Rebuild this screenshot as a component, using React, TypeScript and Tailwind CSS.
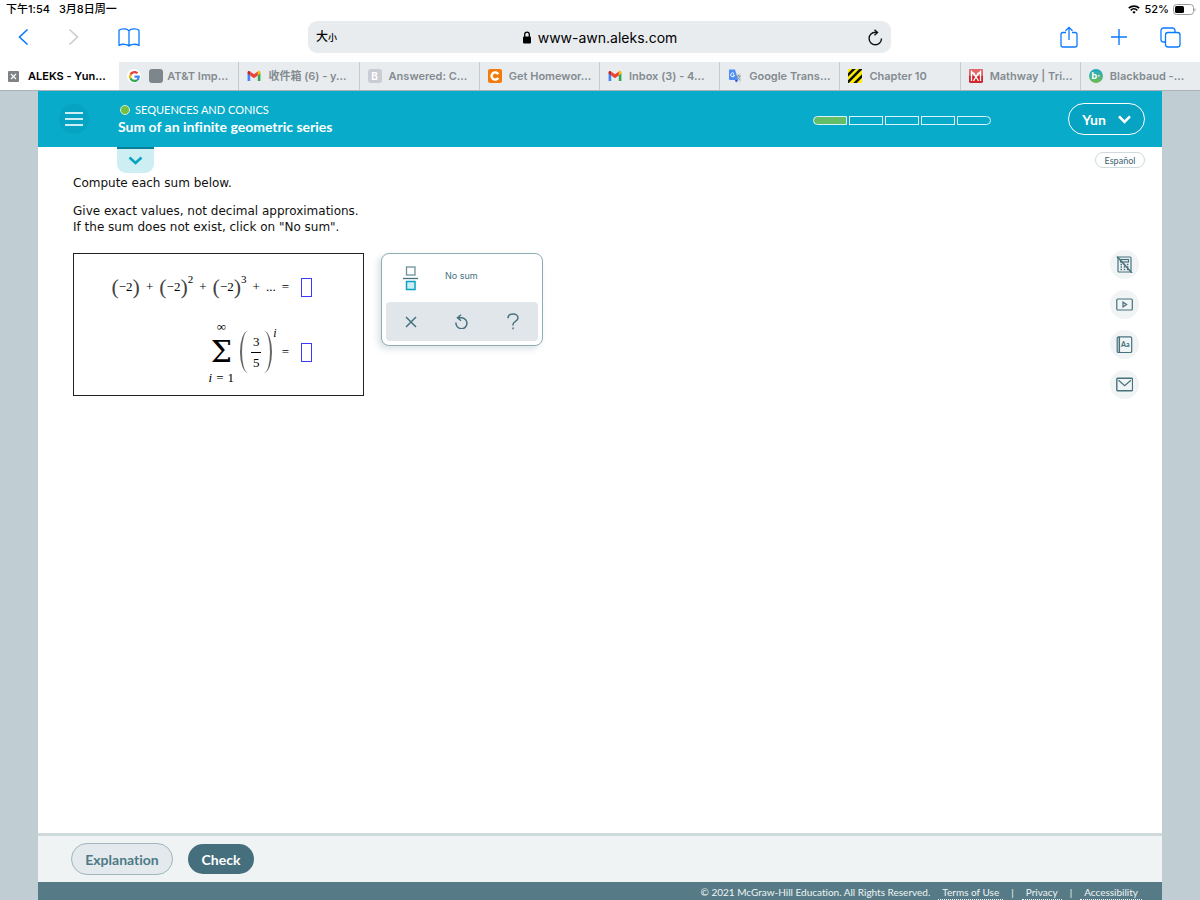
import type { ReactNode } from "react";
import clsx from "clsx";

const GmailIcon = () => (
  <svg width="14" height="14" viewBox="0 0 24 24">
    <path d="M1 20V6.500L5.500 10v10.500H2A1 1 0 0 1 1 20z" fill="#4285f4"/>
    <path d="M23 20V6.500L18.500 10v10.500H22a1 1 0 0 0 1-.5z" fill="#34a853"/>
    <path d="M18.500 5v6L23 7.500V6c0-2.400-2.600-3.600-4.500-2.200z" fill="#fbbc04"/>
    <path d="M1 6v1.500L5.500 11V4.500l-.5-.4C3.200 2.800 1 3.800 1 6z" fill="#c5221f"/>
    <path d="M5.500 11V4.200L12 9.200l6.500-5V11L12 16z" fill="#ea4335"/>
  </svg>
);

const GoogleIcon = () => (
  <span className="flex size-[14px] items-center justify-center rounded-full bg-white">
    <svg width="11" height="11" viewBox="0 0 48 48">
      <path fill="#ea4335" d="M24 9.500c3.500 0 6.700 1.200 9.200 3.600l6.900-6.900C35.900 2.400 30.500 0 24 0 14.600 0 6.500 5.400 2.600 13.200l8 6.200C12.400 13.700 17.700 9.500 24 9.500z"/>
      <path fill="#4285f4" d="M47 24.600c0-1.600-.2-3.100-.4-4.600H24v9h12.900c-.6 3-2.300 5.500-4.800 7.200l7.700 6C44.400 38 47 31.800 47 24.600z"/>
      <path fill="#fbbc05" d="M10.500 28.600a14.500 14.500 0 0 1 0-9.200l-8-6.200a24 24 0 0 0 0 21.600z"/>
      <path fill="#34a853" d="M24 48c6.500 0 11.900-2.100 15.900-5.800l-7.700-6c-2.200 1.500-4.900 2.300-8.200 2.300-6.300 0-11.600-4.200-13.500-9.900l-8 6.200C6.500 42.600 14.600 48 24 48z"/>
    </svg>
  </span>
);

const TranslateIcon = () => (
  <svg width="14" height="14" viewBox="0 0 14 14">
    <path d="M5 4h8v9.500H8z" fill="#dcdfe2"/>
    <path d="M8.500 7h4M10.500 6v1M12 7c-.5 2-1.500 3-3 4M9.500 8c.5 1.500 1.500 2.500 3 3" stroke="#8b9499" fill="none"/>
    <path d="M1 .5h6L10 11H2a1 1 0 0 1-1-1z" fill="#4e8df5"/>
    <path d="M7 11h3L8 13.500z" fill="#2348c9"/>
    <path d="M6 4.500A1.900 1.900 0 1 0 6.500 6H4.800" stroke="#fff" fill="none"/>
  </svg>
);

const StripesIcon = () => (
  <svg width="14" height="14" viewBox="0 0 14 14">
    <rect width="14" height="14" fill="#ffee00"/>
    <path d="M-1 7 7-1M-1 14 14-1M6 15 15 6" stroke="#111" strokeWidth="2.600"/>
  </svg>
);

const MathwayIcon = () => (
  <svg width="14" height="14" viewBox="0 0 14 14">
    <rect width="14" height="14" rx="1.500" fill="#d0272a"/>
    <rect width="14" height="7" rx="1.500" fill="#e4676a"/>
    <path d="M2.500 12V2.500L7 8l4.500-5.500V12M4.500 12l5-8.500M9.500 12l-5-8.500" stroke="#fff" strokeWidth="1.300" fill="none"/>
  </svg>
);

const tabs: { title: string; icon: ReactNode }[] = [
  {
    title: "ALEKS - Yun...",
    icon: (
      <svg width="11" height="11" viewBox="0 0 11 11">
        <rect width="11" height="11" rx="1" fill="#7d8387"/>
        <path d="m3 3 5 5M8 3 3 8" stroke="#fff" strokeWidth="1.200"/>
      </svg>
    ),
  },
  {
    title: "AT&T Imp...",
    icon: (
      <>
        <GoogleIcon/>
        <span className="ml-1 size-[14px] rounded-[3px] bg-[#7d868b]"/>
      </>
    ),
  },
  { title: "收件箱 (6) - y...", icon: <GmailIcon/> },
  {
    title: "Answered: C...",
    icon: <span className="flex size-[14px] items-center justify-center rounded-[3px] bg-[#cbcbd3] text-[10px] font-bold text-white">B</span>,
  },
  {
    title: "Get Homewor...",
    icon: (
      <svg width="14" height="14" viewBox="0 0 14 14">
        <rect width="14" height="14" rx="2" fill="#f47b0b"/>
        <path d="M10.300 5.200a3.600 3.600 0 1 0 0 3.600" stroke="#fff" strokeWidth="2.400" fill="none"/>
      </svg>
    ),
  },
  { title: "Inbox (3) - 4...", icon: <GmailIcon/> },
  { title: "Google Trans...", icon: <TranslateIcon/> },
  { title: "Chapter 10", icon: <StripesIcon/> },
  { title: "Mathway | Tri...", icon: <MathwayIcon/> },
  {
    title: "Blackbaud -...",
    icon: <span className="flex size-[14px] items-center justify-center rounded-full bg-linear-to-b from-[#14a7c9] to-[#6dbb45] text-[9px] font-bold text-white">b·</span>,
  },
];

function StatusBar() {
  return (
    <div className="flex h-[18px] items-center justify-between pr-1 pl-[6px] text-[11px] leading-[18px] font-medium text-black">
      <div className="flex gap-[9px]">
        <span>下午1:54</span>
        <span>3月8日周一</span>
      </div>
      <div className="flex items-center gap-1">
        <svg width="12" height="9" viewBox="0 0 12 9" fill="none" stroke="#000" strokeWidth="1.700">
          <path d="M.8 3.200a7.500 7.500 0 0 1 10.400 0M2.700 5.300a4.700 4.700 0 0 1 6.600 0"/>
          <path d="M6 8.800 4.300 7a2.500 2.500 0 0 1 3.400 0z" fill="#000" stroke="none"/>
        </svg>
        <span>52%</span>
        <svg width="23" height="11" viewBox="0 0 23 11">
          <rect x=".5" y=".5" width="20" height="10" rx="3" fill="none" stroke="#9a9a9a"/>
          <rect x="2" y="2" width="9" height="7" rx="1.500" fill="#000"/>
          <path d="M21.500 4v3.500c1.400-.6 1.400-2.900 0-3.500z" fill="#9a9a9a"/>
        </svg>
      </div>
    </div>
  );
}

function Toolbar() {
  return (
    <div className="flex h-[44px] items-center pb-[6px] text-[#0a7aff]">
      <div className="flex w-[308px] items-center gap-[39px] pl-[18px]">
        <button aria-label="Back">
          <svg width="11" height="18" viewBox="0 0 11 18" fill="none" stroke="currentColor" strokeWidth="1.600"><path d="M9.500 1.500 1.500 9l8 7.500"/></svg>
        </button>
        <button aria-label="Forward" className="text-[#c9cccf]">
          <svg width="11" height="18" viewBox="0 0 11 18" fill="none" stroke="currentColor" strokeWidth="1.600"><path d="m1.500 1.500 8 7.500-8 7.500"/></svg>
        </button>
        <button aria-label="Bookmarks">
          <svg width="22" height="19" viewBox="0 0 22 19" fill="none" stroke="currentColor" strokeWidth="1.300" strokeLinejoin="round">
            <path d="M11 3C9.500.2 3 .2 1 2.200V17.500c2.500-1.800 8.500-1.600 10 .5V3zM11 3c1.500-2.800 8-2.800 10-.8V17.500c-2.500-1.800-8.500-1.600-10 .5"/>
          </svg>
        </button>
      </div>
      <div className="flex h-8 flex-1 items-center justify-between rounded-[9px] bg-[#e9ecef] px-2 text-black">
        <button className="w-6 text-left text-[12px] font-medium">大<span className="text-[9px]">小</span></button>
        <div className="flex items-center gap-[6px] text-[14px]">
          <svg width="10" height="13" viewBox="0 0 10 13">
            <rect x="1" y="5.500" width="8" height="7" rx="1" fill="#000"/>
            <path d="M2.700 6V3.500a2.300 2.300 0 0 1 4.600 0V6" stroke="#000" strokeWidth="1.300" fill="none"/>
          </svg>
          www-awn.aleks.com
        </div>
        <button aria-label="Reload" className="flex w-6 justify-end">
          <svg width="15" height="17" viewBox="0 0 15 17" fill="none" stroke="#111" strokeWidth="1.400">
            <path d="M13.500 9.500A6.200 6.200 0 1 1 7.300 3.300h2"/><path d="m6.500.8 3 2.600-3 2.800"/>
          </svg>
        </button>
      </div>
      <div className="flex w-[309px] items-center justify-end gap-[33px] pr-[19px]">
        <button aria-label="Share">
          <svg width="18" height="22" viewBox="0 0 18 22" fill="none" stroke="currentColor" strokeWidth="1.300">
            <path d="M6 6.500H3a2 2 0 0 0-2 2V19a2 2 0 0 0 2 2h12a2 2 0 0 0 2-2V8.500a2 2 0 0 0-2-2h-3M9 14V1.500M5.500 4.800 9 1.300l3.500 3.500"/>
          </svg>
        </button>
        <button aria-label="New tab">
          <svg width="16" height="16" viewBox="0 0 16 16" stroke="currentColor" strokeWidth="1.400"><path d="M8 0v16M0 8h16"/></svg>
        </button>
        <button aria-label="Show tabs">
          <svg width="21" height="21" viewBox="0 0 21 21" fill="none" stroke="currentColor" strokeWidth="1.300">
            <rect x="5.500" y="5.500" width="14.500" height="14.500" rx="2.500"/>
            <path d="M5.500 15H3.500A2.500 2.500 0 0 1 1 12.500v-9A2.500 2.500 0 0 1 3.500 1h9A2.500 2.500 0 0 1 15 3.500v2"/>
          </svg>
        </button>
      </div>
    </div>
  );
}

function TabStrip() {
  return (
    <div className="flex h-[29px] border-b border-[#a9b3b8]">
      {tabs.map((tab, i) => (
        <button
          key={tab.title}
          className={clsx(
            "flex min-w-0 flex-1 items-center pl-2 text-[11px] font-semibold whitespace-nowrap",
            i === 0 ? "gap-[9px] bg-white text-black" : "bg-[#e9ecef] text-[#838b90]",
            i === 1 && "gap-1",
            i > 1 && "gap-[7px] border-l border-[#c3cbcf]",
          )}
        >
          {tab.icon}
          {tab.title}
        </button>
      ))}
    </div>
  );
}

function Header() {
  return (
    <header className="flex h-14 items-center bg-[#08acca] pr-[17px] pl-[21px] font-['Lato',sans-serif] text-white">
      <button aria-label="Menu" className="flex size-[30px] flex-col items-center justify-center gap-1 rounded-full bg-[#06a3c2]">
        <span className="h-[2px] w-[18px] bg-white/80"/>
        <span className="h-[2px] w-[18px] bg-white/80"/>
        <span className="h-[2px] w-[18px] bg-white/80"/>
      </button>
      <div className="ml-[29px]">
        <p className="flex items-center gap-[5px] pl-[2px] text-[11px] leading-4">
          <span className="size-[10px] rounded-full border border-[#d6efd0] bg-[#74bf44]"/>
          SEQUENCES AND CONICS
        </p>
        <h1 className="text-[14px] leading-[18px] font-bold">Sum of an infinite geometric series</h1>
      </div>
      <div className="mr-[77px] ml-auto flex gap-[2px] pt-[2px]">
        {[0, 1, 2, 3, 4].map((n) => (
          <span
            key={n}
            className={clsx(
              "h-[9px] w-[34px] border border-[#d9f3f8]",
              n === 0 && "rounded-l-full bg-[#64be68]",
              n === 4 && "rounded-r-full",
            )}
          />
        ))}
      </div>
      <button className="flex h-8 w-[77px] items-center justify-center gap-3 rounded-full border border-white bg-[#06a3c2] text-[14px] font-bold">
        Yun
        <svg width="13" height="9" viewBox="0 0 13 9" fill="none" stroke="currentColor" strokeWidth="2.600"><path d="m1 1.300 5.500 5.500L12 1.300"/></svg>
      </button>
    </header>
  );
}

const tall = { left: "rounded-[100%_0_0_100%/50%_0_0_50%] border-l-2", right: "rounded-[0_100%_100%_0/0_50%_50%_0] border-r-2" };

const Term = ({ power }: { power?: string }) => (
  <span className="flex items-center">
    <span className="text-[22px] text-[#444]">(</span>
    <span>−2</span>
    <span className="text-[22px] text-[#444]">)</span>
    {power && <sup className="top-0 self-start text-[11px] leading-[8px]">{power}</sup>}
  </span>
);

const AnswerBox = ({ label }: { label: string }) => (
  <input aria-label={label} className="h-[19px] w-[11px] border border-[#3a3aff] bg-white outline-none"/>
);

function Problem() {
  return (
    <div className="flex h-[143px] w-[291px] flex-col items-end border border-[#222] pr-[51px] font-['Liberation_Serif',serif] text-[13px] leading-6 text-black">
      <div className="mt-[21px] flex h-6 items-center">
        <div className="flex items-center gap-[6px]">
          <Term/>
          <span>+</span>
          <Term power="2"/>
          <span>+</span>
          <Term power="3"/>
          <span>+</span>
          <span>...</span>
          <span>=</span>
        </div>
        <span className="ml-3 flex"><AnswerBox label="First sum"/></span>
      </div>
      <div className="mt-5 flex items-center">
        <div className="flex w-[28px] flex-col items-center leading-[15px]">
          <span>∞</span>
          <span className="font-['DejaVu_Serif',serif] text-[30px] leading-[36px]">Σ</span>
          <span className="flex gap-1"><i>i</i><span>=</span><span>1</span></span>
        </div>
        <div className="ml-[5px] flex h-[42px] items-center">
          <span className={clsx("h-[42px] w-2 border-[#666]", tall.left)}/>
          <div className="mx-[3px] flex flex-col items-center leading-[20px]">
            <span>3</span>
            <span className="h-px w-[10px] bg-black"/>
            <span>5</span>
          </div>
          <span className={clsx("h-[42px] w-2 border-[#666]", tall.right)}/>
          <i className="ml-px self-start text-[12px] leading-[4px]">i</i>
        </div>
        <span className="ml-[5px]">=</span>
        <span className="ml-3 flex"><AnswerBox label="Second sum"/></span>
      </div>
    </div>
  );
}

function Palette() {
  return (
    <div className="flex h-[93px] w-[162px] flex-col justify-between rounded-lg border border-[#8fabb3] bg-white p-1 text-[#47717f] shadow-[-3px_3px_6px_rgba(70,110,125,0.200)]">
      <div className="flex h-10 items-center pl-[17px]">
        <button aria-label="Fraction">
          <svg width="15" height="25" viewBox="0 0 15 25" fill="none">
            <rect x="3.500" y="1" width="8.500" height="8" stroke="#6b929b" strokeWidth="1.300"/>
            <path d="M0 12.500h15" stroke="#47717f" strokeWidth="1.300"/>
            <rect x="3.500" y="15.500" width="8.500" height="8" fill="#cdeef3" stroke="#08a3c0" strokeWidth="1.500"/>
          </svg>
        </button>
        <button className="ml-[27px] pb-1 font-['Inter',sans-serif] text-[9px]">No sum</button>
      </div>
      <div className="flex h-[39px] items-center justify-around rounded bg-[#e0e6e9]">
        <button aria-label="Clear">
          <svg width="12" height="12" viewBox="0 0 12 12" stroke="currentColor" strokeWidth="1.500"><path d="m1 1 10 10M11 1 1 11"/></svg>
        </button>
        <button aria-label="Undo">
          <svg width="13" height="15" viewBox="0 0 13 15" fill="none" stroke="currentColor" strokeWidth="1.500"><path d="M1 8.500A5.500 5.500 0 1 0 6.500 3.700H2.500M6 .7 2.500 3.700l3.500 3"/></svg>
        </button>
        <button aria-label="Help">
          <svg width="12" height="17" viewBox="0 0 12 17" fill="none" stroke="currentColor" strokeWidth="1.500"><path d="M1 5.200C1 2.500 3.200 1 6 1s5 1.600 5 4c0 3.200-5 3.400-5 6.500v1M6 14.500v1.700"/></svg>
        </button>
      </div>
    </div>
  );
}

const tools = [
  {
    name: "Calculator unavailable",
    icon: (
      <>
        <rect x="2" y="1" width="13" height="15" rx="1"/>
        <rect x="4.500" y="3.500" width="8" height="2.500"/>
        <path d="M4.500 8.500h8M4.500 11h8M4.500 13.500h8" strokeWidth="1.500" strokeDasharray="1.500 1.700"/>
        <path d="M1 .5 16 17" strokeWidth="1.500"/>
      </>
    ),
  },
  {
    name: "Video",
    icon: (
      <>
        <rect x=".8" y="3" width="15.500" height="11" rx="1"/>
        <path d="M7 6.200v4.600l3.600-2.300z"/>
      </>
    ),
  },
  {
    name: "Dictionary",
    icon: (
      <>
        <rect x="1.200" y=".8" width="14.500" height="15.800" rx="1.500"/>
        <path d="M3.300.8v15.800" strokeWidth="1.500"/>
        <text x="5" y="11" fontSize="7" fontWeight="900" fontFamily="Lato, sans-serif" fill="currentColor" stroke="none">Aa</text>
      </>
    ),
  },
  {
    name: "Message",
    icon: (
      <>
        <rect x=".8" y="2.300" width="15.800" height="12.400" rx="1" strokeWidth="1.400"/>
        <path d="m2.500 4.300 6.200 5.400 6.200-5.400"/>
      </>
    ),
  },
];

function Footer() {
  return (
    <footer className="flex h-[18px] justify-end overflow-hidden bg-[#567b86] pr-5 font-['Lato',sans-serif] text-[10px] leading-[20px] text-[#eef4f5]">
      <span>© 2021 McGraw-Hill Education. All Rights Reserved.</span>
      <nav className="flex h-[18px] gap-2 pl-2">
        <a href="#terms" className="border-b border-dotted border-white px-1">Terms of Use</a>
        <span>|</span>
        <a href="#privacy" className="border-b border-dotted border-white px-1">Privacy</a>
        <span>|</span>
        <a href="#accessibility" className="border-b border-dotted border-white px-1">Accessibility</a>
      </nav>
    </footer>
  );
}

export default function App() {
  return (
    <div className="flex min-h-screen flex-col bg-white font-['Inter','Noto_Sans_CJK_SC',sans-serif] [font-variant-ligatures:none]">
      <StatusBar/>
      <Toolbar/>
      <TabStrip/>
      <div className="flex flex-1 flex-col bg-[#c0cdd3] px-[38px]">
        <Header/>
        <main className="flex flex-1 justify-between bg-white pr-[17px] pl-[35px]">
          <div>
            <button aria-label="Show details" className="ml-11 flex h-[26px] w-[37px] items-center justify-center rounded-b-[9px] border-t-2 border-[#087f96] bg-[#cdeef3] text-[#08a5c3]">
              <svg width="15" height="10" viewBox="0 0 15 10" fill="none" stroke="currentColor" strokeWidth="2.600"><path d="m1.500 1.500 6 5.500 6-5.500"/></svg>
            </button>
            <div className="mt-[2px] font-['DejaVu_Sans',sans-serif] text-[12px] leading-4 text-[#111]">
              <p>Compute each sum below.</p>
              <p className="mt-3">
                Give exact values, not decimal approximations.
                <br/>
                If the sum does not exist, click on "No sum".
              </p>
            </div>
            <div className="mt-[18px] flex items-start gap-[17px]">
              <Problem/>
              <Palette/>
            </div>
          </div>
          <aside className="flex flex-col items-end pt-[5px] text-[#47717f]">
            <button className="h-4 w-[50px] rounded-full border border-[#cfdadd] font-['Lato',sans-serif] text-[9px] leading-4 text-[#3a6270]">Español</button>
            <div className="mt-[82px] mr-[6px] flex flex-col gap-[11px]">
              {tools.map((tool) => (
                <button key={tool.name} aria-label={tool.name} className="flex size-[29px] items-center justify-center rounded-full bg-[#f0f4f5]">
                  <svg width="17" height="17" viewBox="0 0 17 17" fill="none" stroke="currentColor" strokeWidth="1.200">{tool.icon}</svg>
                </button>
              ))}
            </div>
          </aside>
        </main>
        <div className="flex h-[49px] items-center gap-[15px] border-t-[3px] border-[#cfdadc] bg-[#eff3f4] pl-[33px] font-['Lato',sans-serif] text-[14px] font-bold">
          <button className="h-8 w-[102px] rounded-full border border-[#9fb7bd] bg-[#e3e9ec] text-[#4d7986]">Explanation</button>
          <button className="h-[30px] w-[66px] rounded-full bg-[#456f7c] text-white">Check</button>
        </div>
        <Footer/>
      </div>
    </div>
  );
}
